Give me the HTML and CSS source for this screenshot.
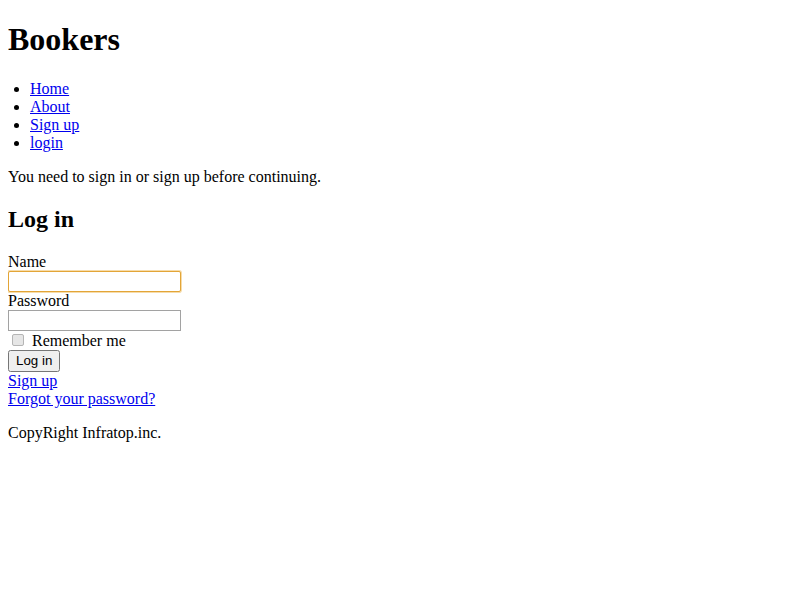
FILE: index.html
```html
<!DOCTYPE html>
<html>
<head>
<meta charset="utf-8">
<title>Bookers</title>
<link rel="stylesheet" href="styles.css">
</head>
<body>
<h1 class="title">Bookers</h1>
<ul class="nav">
  <li><a href="#">Home</a></li>
  <li><a href="#">About</a></li>
  <li><a href="#">Sign up</a></li>
  <li><a href="#">login</a></li>
</ul>
<p class="notice">You need to sign in or sign up before continuing.</p>
<h2>Log in</h2>
<form>
  <div class="field">
    <label for="name">Name</label><br>
    <input type="text" id="name" class="text-input focused">
  </div>
  <div class="field">
    <label for="password">Password</label><br>
    <input type="password" id="password" class="text-input">
  </div>
  <div class="field check-row">
    <input type="checkbox" id="remember" class="check">
    <label for="remember">Remember me</label>
  </div>
  <div class="actions">
    <input type="submit" value="Log in" class="btn">
  </div>
</form>
<a href="#">Sign up</a><br>
<a href="#">Forgot your password?</a><br>
<p class="copy">CopyRight Infratop.inc.</p>
</body>
</html>
```

FILE: styles.css
```css
html {
  margin: 0;
  padding: 0;
}
body {
  margin: 0 8px 8px;
  font-family: "Liberation Serif", "Times New Roman", serif;
  font-size: 16px;
  color: #000;
  background: #fff;
}
.title {
  margin: 21.44px 0;
}
a {
  color: #0000ee;
}
.nav {
  padding-left: 22px;
}
.text-input {
  font-family: "Liberation Sans", Arial, sans-serif;
  font-size: 13.333px;
  width: 173px;
  height: 21px;
  box-sizing: border-box;
  margin: 0;
  padding: 1px 2px;
  border: 1px solid #a2a2a2;
  border-radius: 0;
  background: #fff;
}
.focused {
  border: 1px solid #e3a537;
  border-radius: 2px;
  box-shadow: 0 0 0 1px #f6dcab;
  outline: none;
}
.check-row {
  padding: 1px 0 0;
}
.check {
  -webkit-appearance: none;
  appearance: none;
  box-sizing: border-box;
  width: 12px;
  height: 12px;
  margin: 0 4px 0 4px;
  border: 1px solid #b5b5b5;
  border-radius: 2px;
  background: #e6e6e6;
  vertical-align: 0;
}
.actions {
  line-height: 0;
}
.btn {
  font-family: "Liberation Sans", Arial, sans-serif;
  font-size: 13.333px;
  line-height: normal;
  height: 22px;
  margin: 0;
  vertical-align: top;
}
```
